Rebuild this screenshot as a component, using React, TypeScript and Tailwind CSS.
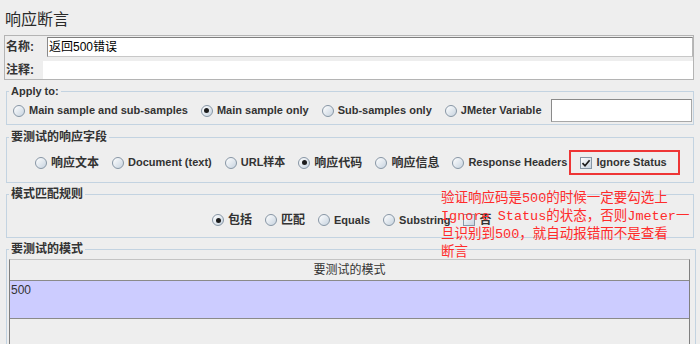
import React from "react";

const UI = "font-['Liberation_Sans','Noto_Sans_CJK_SC',sans-serif]";

function Radio({ checked }: { checked?: boolean }) {
  return (
    <span className="w-[12px] h-[12px] rounded-full border border-[#8796a5] bg-linear-to-br from-white to-[#c7d3df] flex items-center justify-center shrink-0">
      {checked && <span className="w-[5px] h-[5px] rounded-full bg-[#1c1c1c]" />}
    </span>
  );
}

function Check({ checked }: { checked?: boolean }) {
  return (
    <span className="w-[12px] h-[12px] border border-[#8796a5] bg-linear-to-br from-white to-[#c7d3df] flex items-center justify-center shrink-0">
      {checked && (
        <svg width="10" height="10" viewBox="0 0 10 10">
          <path d="M1.5 5.2 L4 7.8 L8.6 2.2" fill="none" stroke="#1c1c1c" strokeWidth="1.7" />
        </svg>
      )}
    </span>
  );
}

function Opt({ label, checked, cjk }: { label: string; checked?: boolean; cjk?: boolean }) {
  return (
    <span className={cjk ? "flex items-center gap-[4px] text-[12px] font-bold whitespace-nowrap" : "flex items-center gap-[4px] text-[11px] font-bold whitespace-nowrap"}>
      <Radio checked={checked} />
      <span>{label}</span>
    </span>
  );
}

export default function App() {
  return (
    <div className={`w-[700px] h-[344px] bg-[#eeeeee] overflow-hidden relative text-[#333333] ${UI}`}>
      <div className="h-[35px] pt-[10px] pl-[5px] text-[16px] leading-[20px] text-[#2a2a2a]">响应断言</div>

      <div className="ml-[4px] w-[690px] border border-[#b4b4b4]">
        <div className="flex h-[22px] items-center">
          <span className="w-[42px] pl-[1px] text-[12px] font-bold">名称:</span>
          <div className="flex-1 h-[20px] bg-white border border-[#a0a0a0] border-t-[#7e7e7e] border-l-[#8a8a8a] border-b-[#c8c8c8] border-r-[#b8b8b8] text-[12px] leading-[18px] pl-[1px] text-black">
            返回500错误
          </div>
        </div>
        <div className="flex h-[21px] items-end">
          <span className="w-[38px] pl-[1px] text-[12px] font-bold self-center pt-[2px]">注释:</span>
          <div className="flex-1 h-[18px] bg-white" />
        </div>
      </div>

      <fieldset className="mt-[4px] ml-[6px] w-[688px] h-[41px] border border-[#c3d3e1]">
        <legend className="ml-[2px] px-[2px] text-[11px] font-bold leading-[14px]">Apply to:</legend>
        <div className="flex items-center gap-[13px] pl-[6px] pt-[1px] h-[24px]">
          <Opt label="Main sample and sub-samples" />
          <Opt label="Main sample only" checked />
          <Opt label="Sub-samples only" />
          <Opt label="JMeter Variable" />
          <div className="flex-1 h-[23px] ml-[-4px] mr-[1px] bg-white border border-[#a8a8a8] border-t-[#8a8a8a] border-l-[#8a8a8a]" />
        </div>
      </fieldset>

      <fieldset className="mt-[5px] ml-[6px] w-[688px] h-[53px] border border-[#c3d3e1]">
        <legend className="ml-[2px] px-[2px] text-[12px] font-bold leading-[14px]">要测试的响应字段</legend>
        <div className="flex items-center gap-[13px] pl-[28px] mt-[6px] h-[25px]">
          <Opt label="响应文本" cjk />
          <Opt label="Document (text)" />
          <Opt label="URL样本" />
          <Opt label="响应代码" cjk checked />
          <Opt label="响应信息" cjk />
          <Opt label="Response Headers" />
          <span className="relative flex items-center gap-[4px] text-[11px] font-bold h-[14px] whitespace-nowrap">
            <Check checked />
            <span>Ignore Status</span>
            <span className="absolute left-[-11px] right-[-13px] top-[-6px] bottom-[-5px] border-2 border-[#ee3535]" />
          </span>
        </div>
      </fieldset>

      <fieldset className="mt-[4px] ml-[6px] w-[688px] h-[51px] border border-[#c3d3e1]">
        <legend className="ml-[2px] px-[2px] text-[12px] font-bold leading-[14px]">模式匹配规则</legend>
        <div className="flex items-center gap-[13px] pl-[205px] mt-[9px] h-[20px]">
          <Opt label="包括" cjk checked />
          <Opt label="匹配" cjk />
          <Opt label="Equals" />
          <Opt label="Substring" />
          <span className="flex items-center gap-[4px] text-[12px] font-bold">
            <Check />
            <span>否</span>
          </span>
        </div>
      </fieldset>

      <fieldset className="mt-[4px] ml-[6px] w-[690px] h-[120px] border border-[#c3d3e1]">
        <legend className="ml-[2px] px-[2px] text-[12px] font-bold leading-[14px]">要测试的模式</legend>
        <div className="mt-[3px] ml-[2px] w-[681px] border-t border-l border-r border-[#7f7f7f] border-t-[#c4c4c4]">
          <div className="h-[21px] border-b border-[#8a8a8a] text-center text-[12px] leading-[20px] text-[#333]">要测试的模式</div>
          <div className="h-[38px] bg-[#ccccff] border-b border-[#8a8a8a] text-[12px] leading-[16px] pt-[1px] pl-[1px] text-[#333]">500</div>
          <div className="h-[60px]" />
        </div>
      </fieldset>

      <div className="absolute left-[441px] top-[190px] text-[13.5px] leading-[18px] text-[#ff2b2b] whitespace-pre font-['Liberation_Mono','Noto_Sans_CJK_SC',monospace]">
        {"验证响应码是500的时候一定要勾选上\nIgnore Status的状态，否则Jmeter一\n旦识别到500，就自动报错而不是查看\n断言"}
      </div>
    </div>
  );
}
